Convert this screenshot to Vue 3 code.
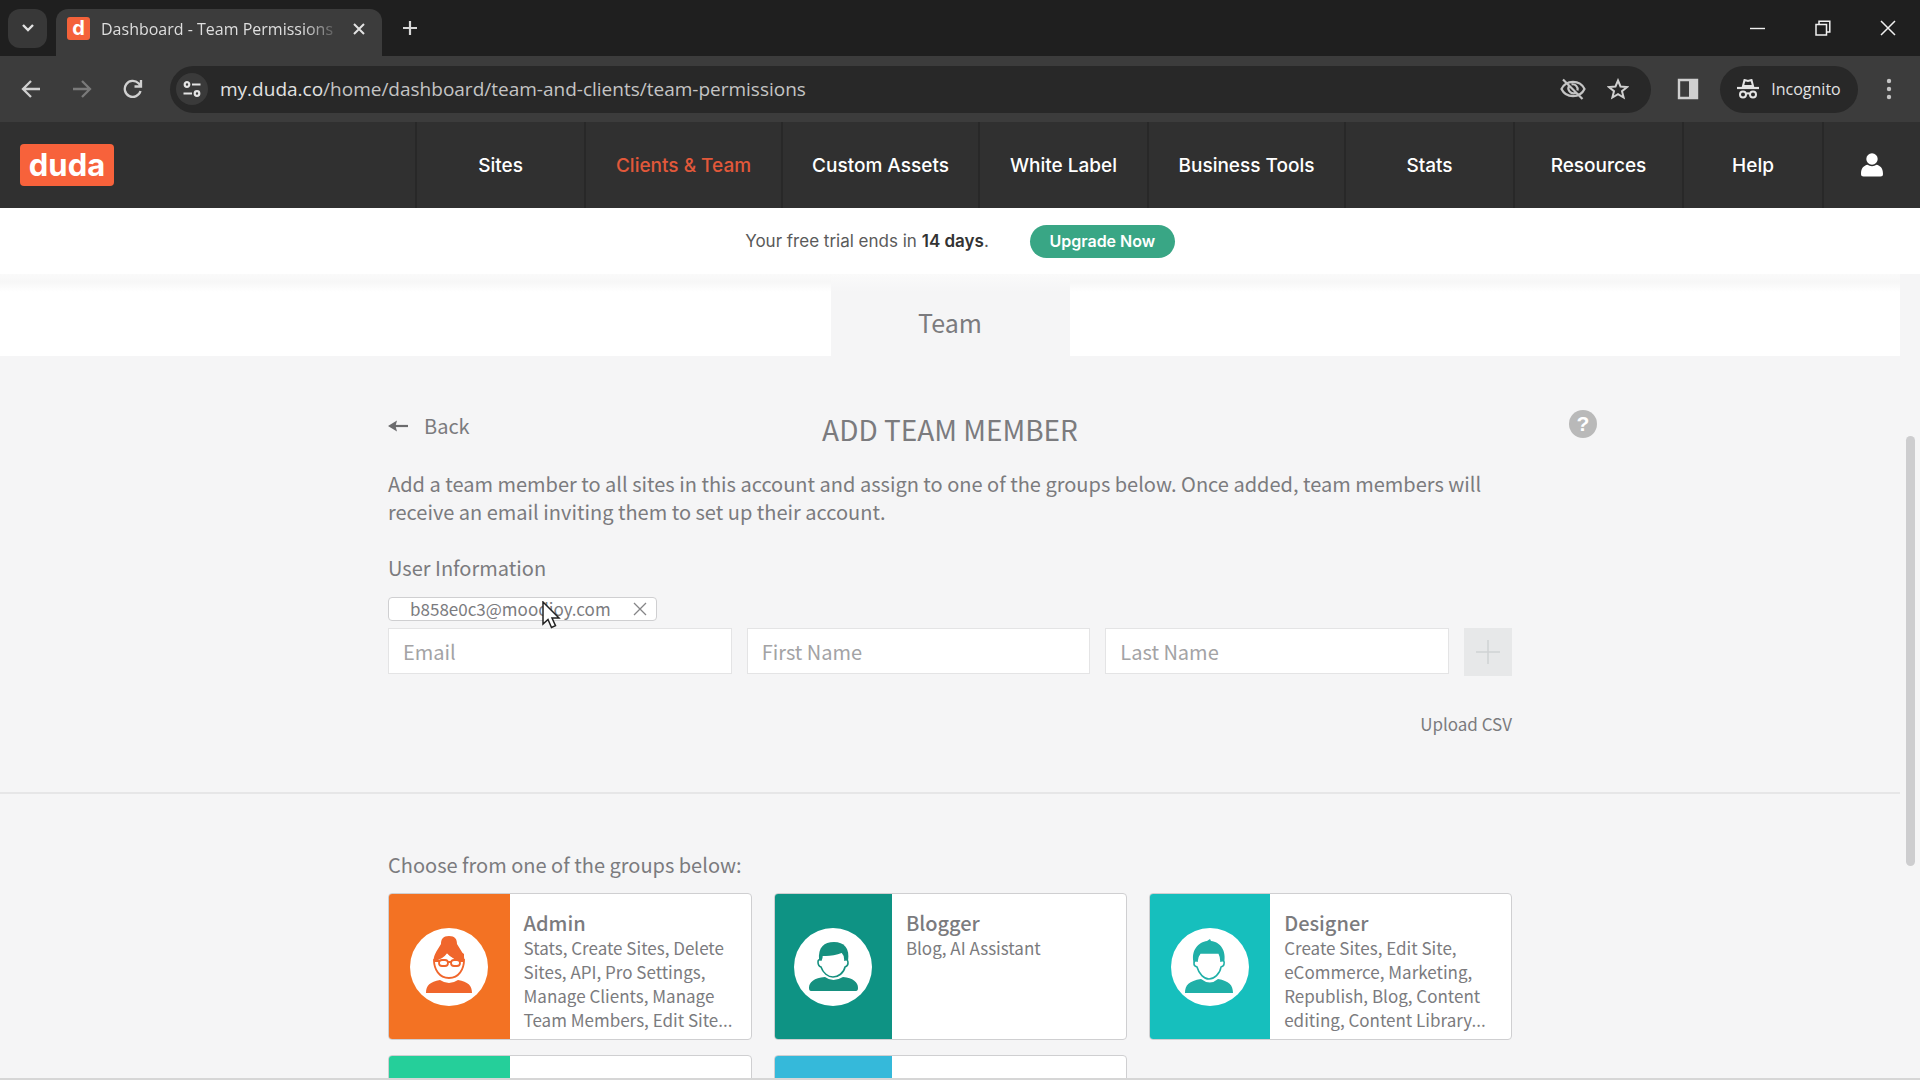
<script setup>
const navItems = [
  { label: 'Sites', size: 'm' },
  { label: 'Clients & Team', size: 'l', active: true },
  { label: 'Custom Assets', size: 'l' },
  { label: 'White Label', size: 'm' },
  { label: 'Business Tools', size: 'l' },
  { label: 'Stats', size: 'm' },
  { label: 'Resources', size: 'm' },
  { label: 'Help', size: 's' },
]

const fields = [
  { id: 'email', label: 'Email', type: 'email' },
  { id: 'first-name', label: 'First Name', type: 'text' },
  { id: 'last-name', label: 'Last Name', type: 'text' },
]

const groups = [
  {
    name: 'Admin',
    tone: 'orange',
    lines: ['Stats, Create Sites, Delete', 'Sites, API, Pro Settings,', 'Manage Clients, Manage', 'Team Members, Edit Site...'],
  },
  { name: 'Blogger', tone: 'green', lines: ['Blog, AI Assistant'] },
  {
    name: 'Designer',
    tone: 'teal',
    lines: ['Create Sites, Edit Site,', 'eCommerce, Marketing,', 'Republish, Blog, Content', 'editing, Content Library...'],
  },
  { name: '', tone: 'mint', lines: [] },
  { name: '', tone: 'sky', lines: [] },
]
</script>

<template>
  <div class="window">
    <header class="tabstrip">
      <button class="tab-search" aria-label="Search tabs">
        <svg width="14" height="10" viewBox="0 0 14 10"><path d="M2 2l5 5 5-5" fill="none" stroke="#e2e2e2" stroke-width="2.4" /></svg>
      </button>
      <div class="tab">
        <span class="favicon">d</span>
        <span class="tab-title">Dashboard - Team Permissions</span>
        <button class="plain" aria-label="Close tab">
          <svg width="12" height="12" viewBox="0 0 12 12"><path d="M1 1l10 10M11 1L1 11" stroke="#e2e2e2" stroke-width="2" /></svg>
        </button>
      </div>
      <button class="plain new-tab" aria-label="New tab">
        <svg width="16" height="16" viewBox="0 0 16 16"><path d="M8 1v14M1 8h14" stroke="#d8d8d8" stroke-width="2.2" /></svg>
      </button>
      <div class="win-controls">
        <button class="plain" aria-label="Minimize">
          <svg width="16" height="16" viewBox="0 0 16 16"><path d="M0 8.500h15" stroke="#f0f0f0" stroke-width="1.400" /></svg>
        </button>
        <button class="plain" aria-label="Restore">
          <svg width="16" height="16" viewBox="0 0 16 16"><path d="M1 4.500h10.500v10.500H1zM4 4.500V1.200h10.800V12h-3.300" fill="none" stroke="#f0f0f0" stroke-width="1.500" /></svg>
        </button>
        <button class="plain" aria-label="Close">
          <svg width="16" height="16" viewBox="0 0 16 16"><path d="M1 1l14 14M15 1L1 15" stroke="#f0f0f0" stroke-width="1.500" /></svg>
        </button>
      </div>
    </header>

    <div class="toolbar">
      <button class="plain tool" aria-label="Back">
        <svg width="20" height="20" viewBox="0 0 20 20"><path d="M19 10H3M10 2l-8 8 8 8" fill="none" stroke="#d0d0d0" stroke-width="2.300" /></svg>
      </button>
      <button class="plain tool" aria-label="Forward">
        <svg width="20" height="20" viewBox="0 0 20 20"><path d="M1 10h16M10 2l8 8-8 8" fill="none" stroke="#7a7a7a" stroke-width="2.300" /></svg>
      </button>
      <button class="plain tool" aria-label="Reload">
        <svg width="20" height="20" viewBox="0 0 20 20"><path d="M17.500 12A8 8 0 1 1 15.500 4.300L18 7M18 1v6.500h-6.500" fill="none" stroke="#d0d0d0" stroke-width="2.300" /></svg>
      </button>
      <div class="address">
        <span class="site-info">
          <svg width="18" height="16" viewBox="0 0 18 16" fill="none" stroke="#e4e4e4" stroke-width="2.200"><circle cx="4" cy="3.500" r="2.300" /><path d="M9 3.500h8.500M.5 12.500H9" /><circle cx="14" cy="12.500" r="2.300" /></svg>
        </span>
        <span class="url">my.duda.co<i>/home/dashboard/team-and-clients/team-permissions</i></span>
        <svg width="26" height="22" viewBox="0 0 26 22" fill="none" stroke="#c4c4c4" stroke-width="2.200"><path d="M1.500 11C6 1.500 20 1.500 24.500 11 20 20.500 6 20.500 1.500 11z" /><path d="M9 8a5 5 0 0 0 7.500 6.200M11.500 6.400a5 5 0 0 1 6 6M3 1.500l19.500 19.500" /></svg>
        <svg width="22" height="22" viewBox="0 0 22 22"><path d="M11 2.500l2.500 6 6.500.5-5 4.200 1.600 6.300L11 16.100l-5.600 3.400L7 13.200 2 9l6.500-.5z" fill="none" stroke="#d0d0d0" stroke-width="2" /></svg>
      </div>
      <button class="plain side-panel" aria-label="Side panel">
        <svg width="22" height="22" viewBox="0 0 22 22"><path d="M2 2h18v18H2z" fill="none" stroke="#cfcfcf" stroke-width="2.400" /><path d="M12 2h8v18h-8z" fill="#cfcfcf" /></svg>
      </button>
      <button class="incognito">
        <svg width="22" height="20" viewBox="0 0 22 20"><path d="M6 7l1.500-6 3.500 1 3.500-1L16 7z" fill="none" stroke="#e4e4e4" stroke-width="2" /><path d="M0 9h22" stroke="#e4e4e4" stroke-width="2.200" /><g fill="none" stroke="#e4e4e4" stroke-width="2"><circle cx="6" cy="15.500" r="3" /><circle cx="16" cy="15.500" r="3" /><path d="M9 15q2-1.500 4 0" /></g></svg>
        Incognito
      </button>
      <button class="plain menu" aria-label="Menu">
        <svg width="6" height="22" viewBox="0 0 6 22" fill="#c4c4c4"><circle cx="3" cy="3" r="2.200" /><circle cx="3" cy="11" r="2.200" /><circle cx="3" cy="19" r="2.200" /></svg>
      </button>
    </div>

    <nav class="nav">
      <div class="brand"><a href="#" class="logo">duda</a></div>
      <a v-for="item in navItems" :key="item.label" href="#" class="nav-item" :class="[item.size, { active: item.active }]">{{ item.label }}</a>
      <a href="#" class="nav-item user" aria-label="Account">
        <svg width="24" height="24" viewBox="0 0 24 24" fill="#fff"><circle cx="12" cy="6" r="5.700" /><path d="M1 21c0-6 3-8.500 6.500-9.200 2.500 1.800 6.500 1.800 9 0C20 12.500 23 15 23 21q0 2.500-2.500 2.500h-17Q1 23.500 1 21z" /></svg>
      </a>
    </nav>

    <div class="banner">
      <span>Your free trial ends in <b>14 days</b>.</span>
      <button class="upgrade">Upgrade Now</button>
    </div>

    <div class="viewport">
      <main class="page">
        <div class="tabs"><a href="#" class="team-tab">Team</a></div>

        <section class="row">
          <div class="content">
            <div class="heading">
              <a href="#" class="back">
                <svg width="20" height="12" viewBox="0 0 20 12"><path d="M0 6l9-5.500L7.500 6 9 11.500z" fill="#6b6b6d" /><path d="M6 6h14" stroke="#6b6b6d" stroke-width="2.200" /></svg>
                Back
              </a>
              <h1>ADD TEAM MEMBER</h1>
            </div>
            <p class="intro">Add a team member to all sites in this account and assign to one of the groups below. Once added, team members will receive an email inviting them to set up their account.</p>
            <h2>User Information</h2>
            <div class="chip">
              <span>b858e0c3@moodjoy.com</span>
              <button class="plain" aria-label="Remove">
                <svg width="14" height="14" viewBox="0 0 14 14"><path d="M1 1l12 12M13 1L1 13" stroke="#858587" stroke-width="1.300" /></svg>
              </button>
              <svg class="pointer" width="20" height="28" viewBox="0 0 20 28"><path d="M1 1v22l5-4.500 3.500 8 4-1.800L10 17h7z" fill="#fff" stroke="#222" stroke-width="1.500" /></svg>
            </div>
            <form class="fields" @submit.prevent>
              <input v-for="f in fields" :id="f.id" :key="f.id" :type="f.type" :placeholder="f.label" :aria-label="f.label" />
              <button class="add" aria-label="Add member">
                <svg width="26" height="26" viewBox="0 0 26 26"><path d="M13 1v24M1 13h24" stroke="#d0d2d4" stroke-width="1.500" /></svg>
              </button>
            </form>
            <a href="#" class="upload">Upload CSV</a>
          </div>
          <button class="help" aria-label="Help">?</button>
        </section>

        <section class="row groups">
          <div class="content">
            <h2>Choose from one of the groups below:</h2>
            <div class="cards">
              <article v-for="g in groups" :key="g.tone" class="card">
                <div class="avatar" :class="g.tone">
                  <svg v-if="g.name" width="78" height="78" viewBox="0 0 78 78">
                    <circle cx="39" cy="39" r="39" fill="#fff" />
                    <g v-if="g.name === 'Admin'">
                      <path d="M24 36c-2-8 3-13 7-20 0-5 2-8 8-8s8 3 8 8c4 7 9 12 7 20z" fill="currentColor" />
                      <path d="M24 32c0 9 5 18 15 18s15-9 15-18q-9 1-17-8-5 7-13 8z" fill="#fff" stroke="currentColor" stroke-width="1.800" />
                      <path d="M36 24q7 8 18 8V26L43 18z" fill="currentColor" />
                      <g fill="none" stroke="currentColor" stroke-width="1.800"><rect x="29" y="32" width="9" height="6" rx="3" /><rect x="41" y="32" width="9" height="6" rx="3" /><path d="M24 33h5M38 34h3M50 33h4" /></g>
                      <path d="M16 65c0-8 4-11 14-13q9 6 18 0c10 2 14 5 14 13z" fill="currentColor" />
                    </g>
                    <g v-else-if="g.name === 'Blogger'">
                      <path d="M25 32C24 19 30 14 40 14s16 6 14 19z" fill="currentColor" />
                      <path d="M28 27q9 1 20-3 3 3 3 8 3-1 3 3 0 3-3 4c-1 6-7 10-12 10s-10-4-12-10q-3-1-3-5 0-3 3-2 1-2 1-5z" fill="#fff" stroke="currentColor" stroke-width="1.600" />
                      <path d="M15 60c0-6 5-10 16-11q8 6 18 0c10 1 15 5 15 11q0 3-2 3H17q-2 0-2-3z" fill="currentColor" />
                    </g>
                    <g v-else>
                      <path d="M23 36C19 22 28 14 36 13l3-2 1 2c9 1 16 9 13 23z" fill="currentColor" />
                      <path d="M29 25h19q2 4 2 8 4-1 3 3 0 2-3 3c-1 7-7 12-12 12S28 46 26 39q-3-1-3-3 0-4 3-3 0-4 3-8z" fill="#fff" stroke="currentColor" stroke-width="1.600" />
                      <path d="M14 65c0-8 4-12 16-14q9 7 17 0c11 2 15 6 15 14z" fill="currentColor" />
                    </g>
                  </svg>
                </div>
                <div class="card-text">
                  <h3>{{ g.name }}</h3>
                  <p v-for="line in g.lines" :key="line">{{ line }}</p>
                </div>
              </article>
            </div>
          </div>
        </section>
      </main>
      <div class="scrollbar"><div class="thumb"></div></div>
    </div>
  </div>
</template>

<style>
body {
  margin: 0;
}
</style>

<style scoped>
* {
  box-sizing: border-box;
}
h1, h2, h3, p {
  margin: 0;
  font-weight: 400;
}
a {
  color: inherit;
  text-decoration: none;
}
svg {
  display: block;
  flex: none;
}
button {
  font: inherit;
  border: 0;
  padding: 0;
  cursor: pointer;
}
.plain {
  background: none;
  display: flex;
  align-items: center;
  justify-content: center;
}
.window {
  height: 100vh;
  display: flex;
  flex-direction: column;
  overflow: hidden;
  background: #f5f5f6;
  border-bottom: 2px solid #d6d6d6;
  font-family: "Noto Sans CJK SC", "Noto Sans", sans-serif;
  color: #7b7b7e;
}

/* Browser frame */
.tabstrip {
  flex: none;
  height: 56px;
  display: flex;
  align-items: center;
  padding-left: 8px;
  background: #1f1f1f;
  color: #dedede;
  font: 16px "Open Sans", sans-serif;
}
.tab-search {
  width: 39px;
  height: 39px;
  border-radius: 12px;
  background: #383838;
  display: flex;
  align-items: center;
  justify-content: center;
}
.tab {
  align-self: flex-end;
  width: 326px;
  height: 47px;
  margin-left: 9px;
  padding: 0 17px 8px 11px;
  display: flex;
  align-items: center;
  gap: 11px;
  border-radius: 12px 12px 0 0;
  background: #3c3c3c;
}
.favicon {
  width: 23px;
  height: 23px;
  border-radius: 3px;
  background: #f4623a;
  color: #fff;
  font: 700 20px/22px Inter, sans-serif;
  text-align: center;
}
.tab-title {
  flex: 1;
  min-width: 0;
  overflow: hidden;
  white-space: nowrap;
  mask-image: linear-gradient(90deg, #000 84%, transparent);
}
.new-tab {
  margin-left: 20px;
}
.win-controls {
  margin-left: auto;
  padding-right: 24px;
  display: flex;
  gap: 49px;
}
.toolbar {
  flex: none;
  height: 66px;
  display: flex;
  align-items: center;
  padding: 0 28px 0 21px;
  background: #3c3c3c;
  color: #e2e2e2;
  font-family: "Open Sans", sans-serif;
}
.tool {
  width: 20px;
  margin-right: 31px;
}
.address {
  flex: 1;
  height: 47px;
  margin-left: -4px;
  padding: 0 22px 0 6px;
  border-radius: 24px;
  background: #282828;
  display: flex;
  align-items: center;
  gap: 21px;
}
.site-info {
  width: 32px;
  height: 32px;
  margin-right: -9px;
  border-radius: 50%;
  background: #3a3a3a;
  display: flex;
  align-items: center;
  justify-content: center;
}
.url {
  flex: 1;
  font-size: 19px;
}
.url i {
  font-style: normal;
  color: #c4c4c4;
}
.side-panel {
  margin: 0 21px 0 26px;
}
.incognito {
  width: 138px;
  height: 47px;
  border-radius: 24px;
  background: #282828;
  color: #e2e2e2;
  font-size: 16px;
  display: flex;
  align-items: center;
  justify-content: center;
  gap: 12px;
}
.menu {
  margin-left: 28px;
}

/* Product navigation */
.nav {
  flex: none;
  height: 86px;
  display: flex;
  background: #303030;
  color: #fff;
  font: 500 19px Inter, sans-serif;
}
.brand {
  flex: 1;
  display: flex;
  align-items: center;
  padding-left: 20px;
}
.logo {
  width: 94px;
  height: 42px;
  border-radius: 4px;
  background: #f7623b;
  font: 700 31px/42px Inter, sans-serif;
  text-align: center;
}
.nav-item {
  display: flex;
  align-items: center;
  justify-content: center;
  border-left: 2px solid #282828;
}
.s {
  width: 140px;
}
.m {
  width: 169px;
}
.l {
  width: 197px;
}
.user {
  width: 98px;
}
.active {
  color: #e2583a;
}
.banner {
  flex: none;
  height: 66px;
  display: flex;
  align-items: center;
  justify-content: center;
  gap: 41px;
  background: #fff;
  color: #5a5a5a;
  font: 17px Inter, sans-serif;
}
.banner b {
  color: #333;
  font-weight: 600;
}
.upgrade {
  width: 145px;
  height: 33px;
  border-radius: 17px;
  background: #39a685;
  color: #fff;
  font-size: 16px;
  font-weight: 600;
}

/* Page */
.viewport {
  flex: 1;
  min-height: 0;
  display: flex;
  overflow: hidden;
}
.page {
  flex: 1;
  min-width: 0;
}
.scrollbar {
  width: 20px;
  padding: 162px 5px 0 6px;
}
.thumb {
  height: 430px;
  border-radius: 5px;
  background: #cdcdcf;
}
.tabs {
  height: 82px;
  display: flex;
  justify-content: center;
  background: linear-gradient(#fafafa, #f7f7f7 8px, #fff 18px);
}
.team-tab {
  width: 239px;
  background: linear-gradient(#fafafa, #f5f5f6 18px);
  font-size: 25px;
  line-height: 96px;
  text-align: center;
}
.row {
  display: grid;
  grid-template-columns: 1fr 1124px 1fr;
}
.content {
  grid-column: 2;
  display: flex;
  flex-direction: column;
  align-items: flex-start;
}
.heading {
  width: 100%;
  margin-top: 53px;
  display: grid;
  grid-template-columns: 1fr auto 1fr;
  align-items: center;
}
.back {
  display: flex;
  align-items: center;
  gap: 16px;
  font-size: 20px;
  line-height: 34px;
  padding-bottom: 6px;
}
h1 {
  font-size: 28px;
  line-height: 40px;
}
.intro {
  margin-top: 21px;
  font-size: 20px;
  line-height: 28px;
}
h2 {
  font-size: 20px;
  line-height: 28px;
}
.intro + h2 {
  margin-top: 28px;
}
.chip {
  position: relative;
  width: 269px;
  height: 24px;
  margin-top: 15px;
  padding: 0 9px 0 21px;
  display: flex;
  align-items: center;
  justify-content: space-between;
  border: 1px solid #cfcfd1;
  border-radius: 4px;
  background: #fff;
  font-size: 17px;
  line-height: 20px;
}
.pointer {
  position: absolute;
  left: 153px;
  top: 3px;
}
.fields {
  width: 100%;
  margin-top: 7px;
  display: flex;
  align-items: flex-start;
  gap: 15px;
}
input {
  flex: 1;
  min-width: 0;
  height: 46px;
  padding: 0 14px;
  border: 1px solid #e4e4e5;
  background: #fff;
  font: 20px "Noto Sans CJK SC", "Noto Sans", sans-serif;
}
input::placeholder {
  color: #a3a3a5;
}
.add {
  width: 48px;
  height: 48px;
  background: #e7e8e9;
  display: flex;
  align-items: center;
  justify-content: center;
}
.upload {
  align-self: flex-end;
  margin: 34px 0 54px;
  font-size: 17px;
  line-height: 28px;
}
.help {
  width: 28px;
  height: 28px;
  margin: 54px 0 0 57px;
  border-radius: 50%;
  background: #b9b9b9;
  color: #fff;
  font: 700 21px/28px "Liberation Sans", sans-serif;
}
.groups {
  border-top: 2px solid #e6e6e7;
}
.groups h2 {
  margin-top: 57px;
}
.cards {
  width: 100%;
  margin-top: 14px;
  display: grid;
  grid-template-columns: 364fr 353fr 363fr;
  gap: 15px 22px;
}
.card {
  height: 147px;
  display: flex;
  border: 1px solid #cfcfd1;
  border-radius: 4px;
  background: #fff;
  overflow: hidden;
}
.avatar {
  width: 33.3%;
  flex: none;
  display: flex;
  align-items: center;
  justify-content: center;
}
.orange {
  background: #f37223;
  color: #f0662c;
}
.green {
  background: #0e9384;
  color: #16907f;
}
.teal {
  background: #16bfbd;
  color: #20b0a8;
}
.mint {
  background: #25cf9a;
}
.sky {
  background: #35b9da;
}
.card-text {
  padding: 15px 0 0 14px;
  font-size: 17px;
  line-height: 24px;
  white-space: nowrap;
}
h3 {
  font-size: 20px;
  line-height: 27px;
  font-weight: 500;
}
</style>
